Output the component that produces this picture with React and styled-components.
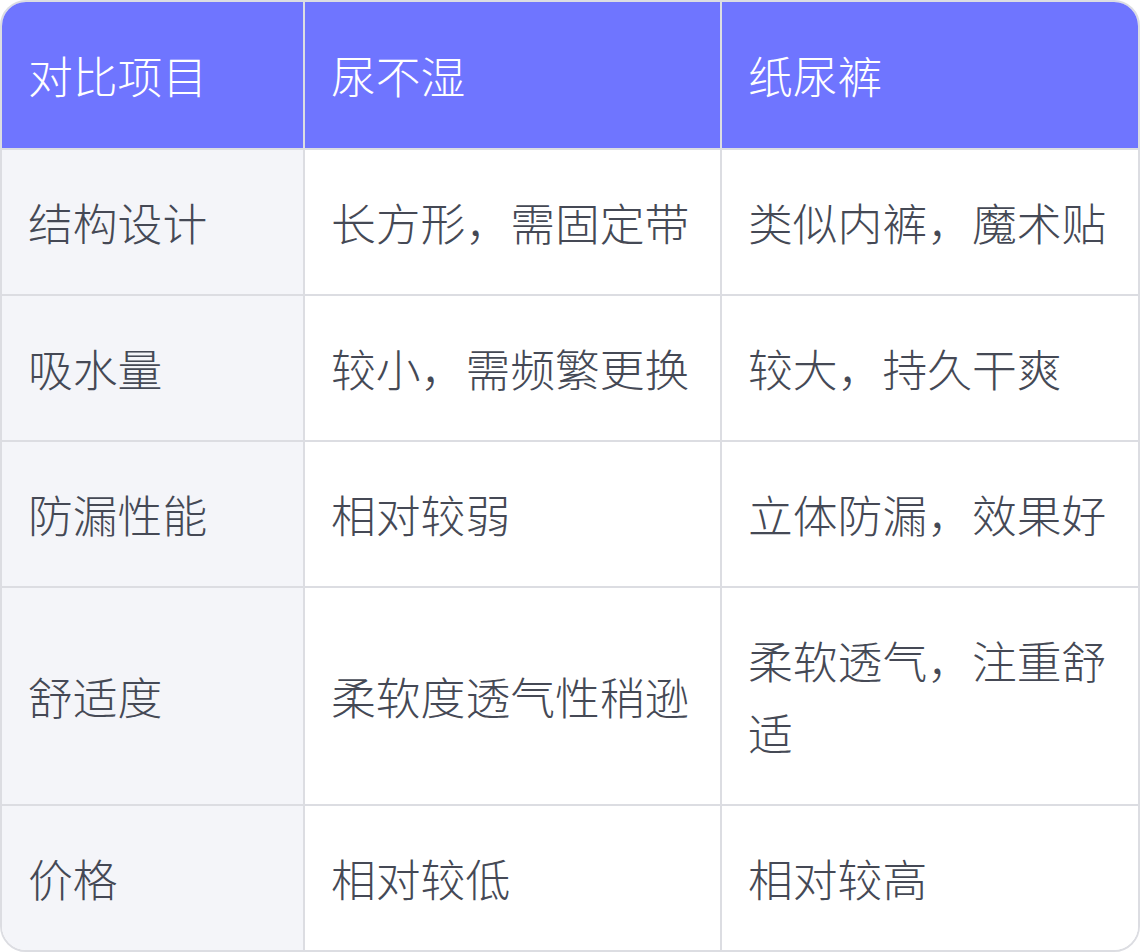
import React from "react";
import styled, { createGlobalStyle } from "styled-components";

const Global = createGlobalStyle`
  html, body { margin: 0; padding: 0; background: #ffffff; }
  body { font-family: "Noto Sans CJK SC", "Noto Sans", sans-serif; }
`;

const Table = styled.div`
  width: 1140px;
  box-sizing: border-box;
  border: 2px solid #dcdde2;
  border-radius: 26px;
  overflow: hidden;
  display: grid;
  grid-template-columns: 301px 417px 1fr;
  background: #ffffff;
`;

const Cell = styled.div`
  box-sizing: border-box;
  padding: ${(p) => (p.$head ? "37px 28px 37px 26px" : "36px 28px 36px 26px")};
  font-size: 44.8px;
  font-weight: 300;
  line-height: 72px;
  color: ${(p) => (p.$head ? "#ffffff" : "#454955")};
  background: ${(p) => (p.$head ? "#6f75ff" : p.$first ? "#f4f5f9" : "#ffffff")};
  border-left: ${(p) => (p.$first ? "none" : "2px solid #dcdde2")};
  border-top: ${(p) => (p.$head ? "none" : "2px solid #dcdde2")};
  display: flex;
  align-items: center;
  word-break: break-all;
`;

const header = ["对比项目", "尿不湿", "纸尿裤"];
const rows = [
  ["结构设计", "长方形，需固定带", "类似内裤，魔术贴"],
  ["吸水量", "较小，需频繁更换", "较大，持久干爽"],
  ["防漏性能", "相对较弱", "立体防漏，效果好"],
  ["舒适度", "柔软度透气性稍逊", "柔软透气，注重舒适"],
  ["价格", "相对较低", "相对较高"],
];

export default function App() {
  return (
    <>
      <Global />
      <Table>
        {header.map((h, i) => (
          <Cell key={"h" + i} $head $first={i === 0}>
            {h}
          </Cell>
        ))}
        {rows.map((r, ri) =>
          r.map((c, ci) => (
            <Cell key={ri + "-" + ci} $first={ci === 0}>
              {c}
            </Cell>
          ))
        )}
      </Table>
    </>
  );
}
